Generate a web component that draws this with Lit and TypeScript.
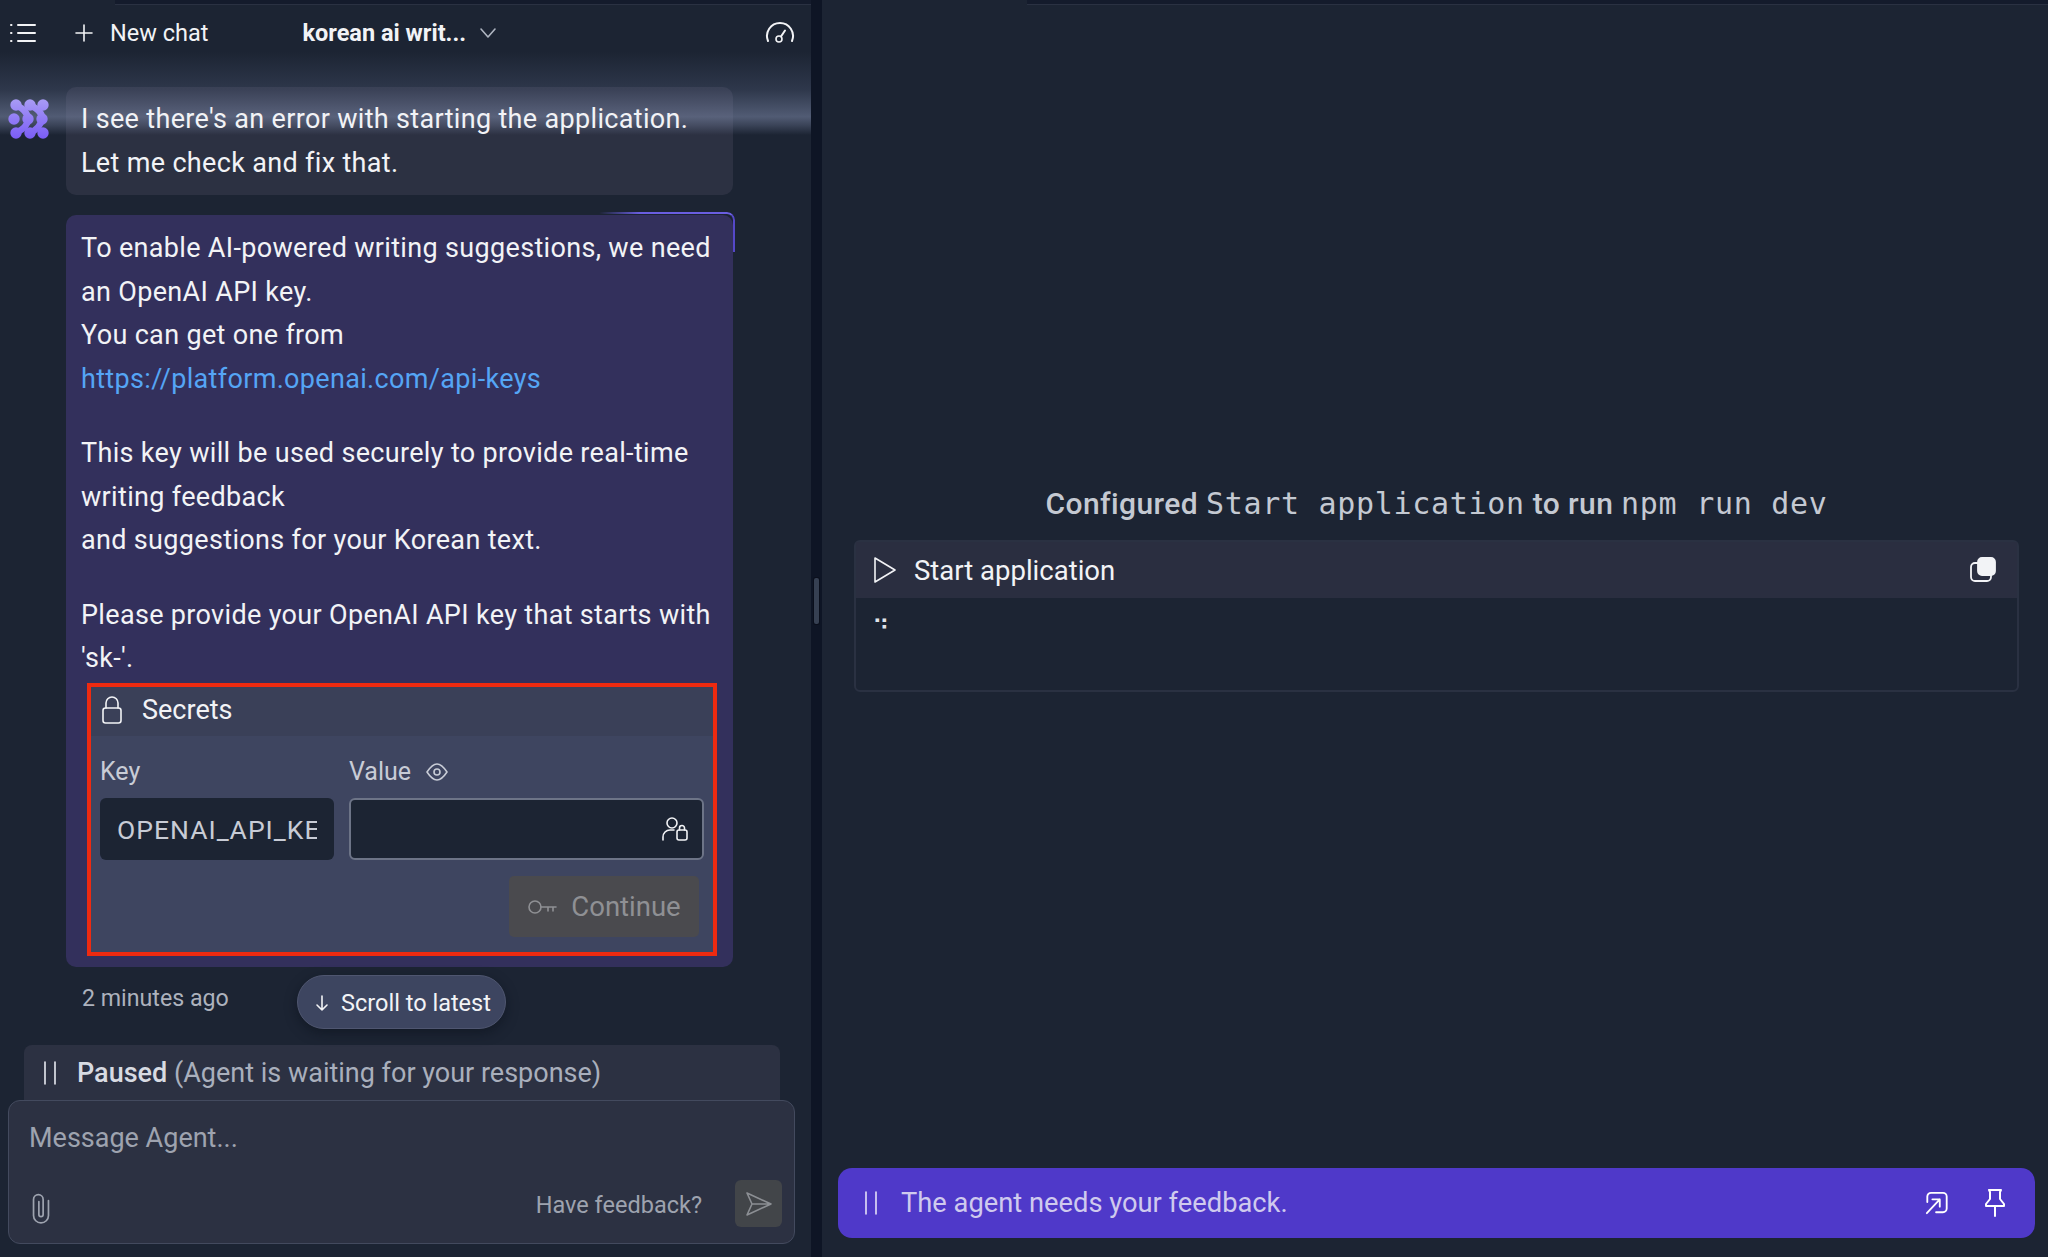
import { LitElement, html, css, svg } from "lit";
import { customElement } from "lit/decorators.js";

const ic = (w: number, h: number, vb: string, body: unknown) =>
  html`<svg width=${w} height=${h} viewBox=${vb} fill="none" stroke="currentColor" stroke-width="1.6" stroke-linecap="round" stroke-linejoin="round">${body}</svg>`;

const pause = ic(14, 26, "0 0 14 26", svg`<path d="M2 2v22M12 2v22"/>`);

const lobes = [
  [10, 8], [24, 8], [37, 8],
  [8, 22], [22, 22], [36, 22],
  [10, 36], [24, 36], [37, 36],
];

@customElement("app-root")
export class AppRoot extends LitElement {
  static styles = css`
    :host {
      display: block;
      width: 2048px;
      height: 1257px;
      overflow: hidden;
      background: #1c2433;
      color: #f2f3f6;
      font-family: Roboto, "Noto Sans", sans-serif;
      font-size: 27px;
    }
    * { box-sizing: border-box; }
    .app { display: flex; width: 2048px; height: 1257px; position: relative; }
    .left { width: 811px; height: 1257px; display: flex; flex-direction: column; position: relative; }
    .divider { width: 11px; background: #0e1525; position: relative; }
    .grip { position: absolute; left: 3px; top: 578px; width: 5px; height: 46px; border-radius: 2px; background: #364052; box-shadow: 0 0 0 1px #0a0f1c; }
    .right { flex: 1; display: flex; flex-direction: column; align-items: stretch; padding: 0 13px 19px 16px; position: relative; }

    .topstrip { position: absolute; top: 0; height: 5px; background: #141b2c; border-bottom: 1px solid #2a3142; }
    .topstrip.a { left: 115px; right: 0; }
    .topstrip.b { left: 205px; right: 0; }

    .header { height: 66px; display: flex; align-items: center; padding: 0 16px 0 9px; flex: none; }
    .header .plus { margin-left: 33px; display: flex; }
    .header .nc { margin-left: 16px; font-size: 23.5px; }
    .header .title { margin-left: 94px; font-weight: 700; font-size: 23.5px; }
    .header .chev { margin-left: 13px; display: flex; color: #aeb4c0; }
    .header .gauge { margin-left: auto; display: flex; }

    .band {
      position: absolute; left: 0; right: 0; top: 52px; height: 83px; pointer-events: none; z-index: 3;
      background: linear-gradient(180deg, rgba(110,124,160,0) 0%, rgba(110,124,160,.22) 45%, rgba(130,142,175,.52) 78%, rgba(130,142,175,.3) 88%, rgba(125,136,170,0) 100%);
    }

    .scroll { flex: 1; display: grid; grid-template-columns: 66px 667px; align-content: start; padding-top: 21px; position: relative; }
    .avatar { padding: 10px 0 0 6px; position: relative; z-index: 4; }
    .bubble { border-radius: 10px; padding: 11px 15px; line-height: 43.5px; letter-spacing: .33px; }
    .b1 { background: #2c3142; height: 108px; margin-bottom: 20px; }
    .b1 .line { position: relative; z-index: 4; }
    .b2 { grid-column: 2; background: #33305c; height: 752px; position: relative; padding-top: 12px; }
    .glow { position: absolute; right: -2px; top: -3px; width: 136px; height: 40px; border-top: 2px solid #6a5ee0; border-right: 2px solid #5548c8; border-top-right-radius: 8px; -webkit-mask-image: linear-gradient(90deg, transparent, #000 30%); mask-image: linear-gradient(90deg, transparent, #000 30%); }
    .line { white-space: nowrap; }
    .gap { height: 31px; }
    a { color: #55a5f5; text-decoration: none; }

    .secrets { position: absolute; left: 21px; top: 468px; width: 630px; height: 273px; border: 4px solid #ee2a10; background: #3e4560; display: flex; flex-direction: column; letter-spacing: 0; line-height: normal; }
    .sh { height: 49px; background: #3a4058; display: flex; align-items: center; gap: 18px; padding-left: 9px; flex: none; padding-bottom: 3px; }
    .sh span { font-size: 27px; }
    .sb { padding: 16px 9px 0 9px; flex: 1; display: flex; flex-direction: column; }
    .fields { display: grid; grid-template-columns: 234px 355px; column-gap: 15px; }
    .lab { display: flex; align-items: center; gap: 14px; height: 46px; color: #c8ccd6; font-size: 25px; padding-bottom: 7px; }
    .inp { height: 62px; border-radius: 6px; background: #1c2433; display: flex; align-items: center; overflow: hidden; }
    .inp.k { padding: 0 17px; color: #c8ccd6; font-size: 26.5px; }
    .inp.k div { overflow: hidden; white-space: nowrap; width: 200px; letter-spacing: 1px; }
    .inp.v { border: 2px solid #6d7487; justify-content: flex-end; padding-right: 13px; }
    .cont { align-self: flex-end; margin: 16px 5px 0 0; width: 190px; height: 61px; border-radius: 5px; background: #4a4a4e; color: #8f9094; display: flex; align-items: center; justify-content: center; gap: 14px; font-size: 27.5px; }

    .stamp { grid-column: 2; padding-left: 16px; margin-top: 16px; color: #adb2bd; font-size: 23.2px; line-height: 30px; }
    .pill { position: absolute; left: 297px; top: 909px; width: 209px; height: 54px; border-radius: 27px; background: #3d4560; border: 1px solid #4f5670; display: flex; align-items: center; justify-content: center; gap: 11px; font-size: 23.5px; padding: 2px 0 0 2px; box-shadow: 0 4px 12px rgba(10,15,25,.5); z-index: 2; }

    .paused { flex: none; margin: 0 31px 0 24px; height: 55px; background: #2c3142; border-radius: 8px 8px 0 0; display: flex; align-items: center; gap: 20px; padding-left: 19px; color: #a9afbc; font-size: 27px; white-space: nowrap; }
    .paused b { color: #d8dbe2; font-weight: 500; }
    .paused svg { color: #e8eaf0; }
    .composer { flex: none; margin: 0 16px 13px 8px; height: 144px; border: 1px solid #434a5e; border-radius: 12px; background: #2c3142; display: flex; flex-direction: column; justify-content: space-between; padding: 20px 12px 15px 20px; color: #9ea3af; }
    .ph { font-size: 27px; line-height: 34px; }
    .cf { display: flex; align-items: flex-end; }
    .cf .fb { margin-left: auto; font-size: 23.5px; margin-bottom: 9px; }
    .cf .clip { display: flex; margin-bottom: 4px; margin-left: -1px; }
    .send { margin-left: 33px; width: 47px; height: 47px; border-radius: 6px; background: #424549; display: flex; align-items: center; justify-content: center; color: #8c8f94; margin-bottom: 1px; }

    .center { flex: 1; display: flex; flex-direction: column; }
    .cfg { margin: 483px 0 0 16px; width: 1165px; height: 40px; display: flex; justify-content: center; align-items: center; color: #c4c9d2; font-weight: 500; font-size: 30px; white-space: pre; letter-spacing: .4px; }
    .cfg code { font-family: "DejaVu Sans Mono", monospace; font-weight: 400; font-size: 30px; letter-spacing: .7px; }
    .panel { margin: 17px 0 0 16px; width: 1165px; height: 152px; border: 2px solid #2a3142; border-radius: 6px; }
    .ph2 { height: 56px; background: #2a2e40; display: flex; align-items: center; padding: 0 20px 0 16px; }
    .ph2 span { margin-left: 16px; font-size: 27.5px; }
    .ph2 .cp { margin-left: auto; display: flex; }
    .dots { padding: 16px 0 0 16px; font-family: "DejaVu Sans", sans-serif; font-size: 24px; line-height: 30px; color: #e0e3ea; }
    .fbbar { flex: none; height: 70px; background: #4f39c9; border-radius: 14px; display: flex; align-items: center; padding: 0 30px 0 26px; color: #cfcaee; font-size: 27.3px; }
    .fbbar .t { margin-left: 23px; }
    .fbbar .i1 { margin-left: auto; display: flex; color: #fff; }
    .fbbar .i2 { margin-left: 36px; display: flex; color: #fff; }
    .fbbar .p { display: flex; color: #e4e0f8; }
  `;

  render() {
    return html`<div class="app">
      <div class="left">
        <div class="topstrip a"></div>
        <div class="header">
          ${ic(32, 24, "0 0 32 24", svg`<path d="M2 4h.5M2 12h.5M2 20h.5M9 4h17M9 12h17M9 20h17" stroke-width="2"/>`)}
          <span class="plus">${ic(20, 20, "0 0 20 20", svg`<path d="M10 2v16M2 10h16"/>`)}</span>
          <span class="nc">New chat</span>
          <span class="title">korean ai writ...</span>
          <span class="chev">${ic(18, 12, "0 0 18 12", svg`<path d="M2 2l7 8 7-8"/>`)}</span>
          <span class="gauge">${ic(30, 24, "0 0 30 24", svg`<path d="M3 20A13 13 0 1 1 27 20" stroke-width="2"/><circle cx="14" cy="18" r="3"/><path d="M16 15.5l4-6" stroke-width="2"/>`)}</span>
        </div>
        <div class="band"></div>
        <div class="scroll">
          <div class="avatar">
            <svg width="46" height="44" viewBox="0 0 46 44" fill="none">
              <defs><linearGradient id="lg" gradientUnits="userSpaceOnUse" x1="0" y1="2" x2="0" y2="42"><stop offset="0" stop-color="#a99cf5"/><stop offset="1" stop-color="#7a5cf5"/></linearGradient></defs>
              <g fill="url(#lg)">${lobes.map(([x, y]) => svg`<circle cx=${x} cy=${y} r="5.7"/>`)}</g>
              <g stroke="url(#lg)" stroke-width="6.5" stroke-linecap="round">
                <path d="M10 8C16 11 22 16 22 22S16 33 10 36"/>
                <path d="M24 8C30 11 37 16 36 22S30 33 24 36"/>
              </g>
            </svg>
          </div>
          <div class="bubble b1">
            <div class="line">I see there's an error with starting the application.</div>
            <div class="line">Let me check and fix that.</div>
          </div>
          <div class="bubble b2">
            <div class="glow"></div>
            <div class="line">To enable AI-powered writing suggestions, we need</div>
            <div class="line">an OpenAI API key.</div>
            <div class="line">You can get one from</div>
            <div class="line"><a>https://platform.openai.com/api-keys</a></div>
            <div class="gap"></div>
            <div class="line">This key will be used securely to provide real-time</div>
            <div class="line">writing feedback</div>
            <div class="line">and suggestions for your Korean text.</div>
            <div class="gap"></div>
            <div class="line">Please provide your OpenAI API key that starts with</div>
            <div class="line">'sk-'.</div>
            <div class="secrets">
              <div class="sh">
                ${ic(24, 30, "0 0 24 30", svg`<rect x="3" y="13" width="18" height="15" rx="2.5"/><path d="M6 13V8a6 6 0 0 1 12 0v5"/>`)}
                <span>Secrets</span>
              </div>
              <div class="sb">
                <div class="fields">
                  <div class="lab">Key</div>
                  <div class="lab">Value ${ic(24, 20, "0 0 24 20", svg`<path d="M2 10C6 4 9 2 12 2s6 2 10 8c-4 6-7 8-10 8s-6-2-10-8z"/><circle cx="12" cy="10" r="3"/>`)}</div>
                  <div class="inp k"><div>OPENAI_API_KEY</div></div>
                  <div class="inp v">${ic(28, 26, "0 0 28 26", svg`<circle cx="11" cy="7" r="5"/><path d="M2 24v-3a7 7 0 0 1 7-7h4"/><rect x="16" y="14" width="10" height="10" rx="2"/><path d="M18.5 14v-2a2.5 2.5 0 0 1 5 0v2"/>`)}</div>
                </div>
                <div class="cont">
                  ${ic(30, 18, "0 0 30 18", svg`<circle cx="8" cy="9" r="6"/><path d="M14 9h15M21 9v4M26 9v4"/>`)}
                  <span>Continue</span>
                </div>
              </div>
            </div>
          </div>
          <div class="stamp">2 minutes ago</div>
          <div class="pill">
            ${ic(16, 20, "0 0 16 20", svg`<path d="M8 3v14M3 12l5 5 5-5"/>`)}
            <span>Scroll to latest</span>
          </div>
        </div>
        <div class="paused">${pause}<span><b>Paused</b> (Agent is waiting for your response)</span></div>
        <div class="composer">
          <div class="ph">Message Agent...</div>
          <div class="cf">
            <span class="clip">${ic(26, 32, "0 0 24 30", svg`<path d="M19 8v14a7 7 0 0 1-14 0V7a4.5 4.5 0 0 1 9 0v14a2 2 0 0 1-4 0V9"/>`)}</span>
            <span class="fb">Have feedback?</span>
            <div class="send">${ic(30, 28, "0 0 30 28", svg`<path d="M3 3l24 11L3 25l5-11zM8 14h19"/>`)}</div>
          </div>
        </div>
      </div>
      <div class="divider"><div class="grip"></div></div>
      <div class="right">
        <div class="topstrip b"></div>
        <div class="center">
          <div class="cfg"><span>Configured </span><code>Start application</code><span> to run </span><code>npm run dev</code></div>
          <div class="panel">
            <div class="ph2">
              ${ic(26, 28, "0 0 26 28", svg`<path d="M3 2l20 12L3 26z"/>`)}
              <span>Start application</span>
              <span class="cp"><svg width="28" height="26" viewBox="0 0 28 26" fill="none" stroke="currentColor" stroke-width="1.8"><rect x="2" y="6" width="20" height="18" rx="4"/><rect x="9" y="1" width="17" height="17" rx="4" fill="currentColor"/></svg></span>
            </div>
            <div class="dots">⠙</div>
          </div>
        </div>
        <div class="fbbar">
          <span class="p">${pause}</span>
          <span class="t">The agent needs your feedback.</span>
          <span class="i1">${ic(24, 26, "0 0 26 26", svg`<path d="M2.5 12V6a4 4 0 0 1 4-4h13a4 4 0 0 1 4 4v13a4 4 0 0 1-4 4H12M2 24L16 9M8 9h8v8" stroke-width="2"/>`)}</span>
          <span class="i2">${ic(20, 30, "0 0 20 30", svg`<path d="M4 2h12l-1 2v7l4 5v2H1v-2l4-5V4zM10 18v10" stroke-width="2"/>`)}</span>
        </div>
      </div>
    </div>`;
  }
}
